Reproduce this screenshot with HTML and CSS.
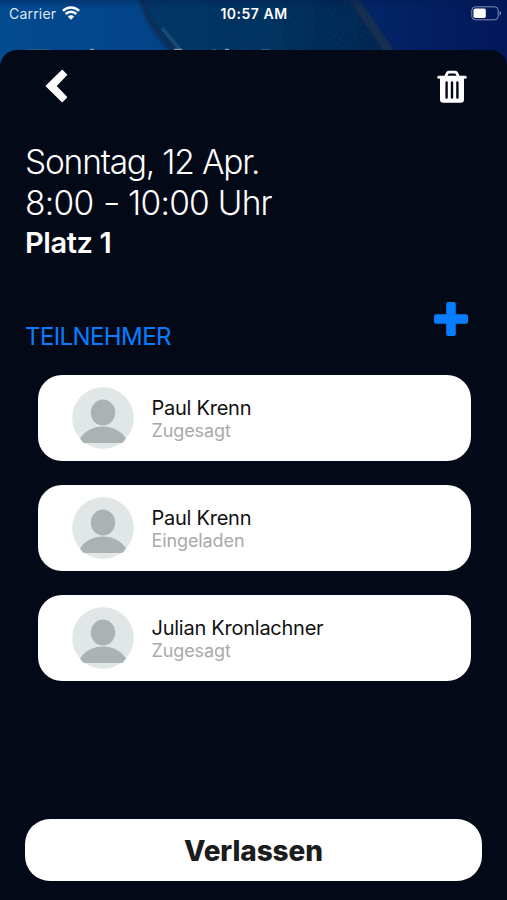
FILE: index.html
```html
<!DOCTYPE html>
<html lang="de">
<head>
<meta charset="utf-8">
<title>Termin</title>
<link rel="stylesheet" href="styles.css">
</head>
<body>
<div class="screen">
  <svg class="backdrop" viewBox="0 0 507 70" aria-hidden="true">
    <defs>
      <linearGradient id="sky" x1="0" x2="1">
        <stop offset="0" stop-color="#034a90"/><stop offset=".28" stop-color="#034488"/>
        <stop offset=".7" stop-color="#032669"/><stop offset="1" stop-color="#021759"/>
      </linearGradient>
      <linearGradient id="racket" x1="0" x2="1">
        <stop offset="0" stop-color="#063766"/><stop offset=".5" stop-color="#05315f"/><stop offset="1" stop-color="#06254e"/>
      </linearGradient>
      <linearGradient id="shade" x2="0" y2="1">
        <stop offset="0" stop-color="#00184a" stop-opacity=".35"/><stop offset=".12" stop-color="#00184a" stop-opacity="0"/>
      </linearGradient>
      <pattern id="strings" width="6" height="6" patternUnits="userSpaceOnUse" patternTransform="rotate(28)">
        <path d="M0 0H6M0 0V6" stroke="#24558a" stroke-width="1" opacity=".16"/>
      </pattern>
      <filter id="soft"><feGaussianBlur stdDeviation="1.3"/></filter>
    </defs>
    <rect width="507" height="70" fill="url(#sky)"/>
    <g filter="url(#soft)">
      <path d="M139-4C144 18 158 38 178 56H397L357-4Z" fill="url(#racket)"/>
      <path d="M141-4C145 17 158 36 176 54" fill="none" stroke="#082f58" stroke-width="5"/>
      <path d="M162 28L182 52" stroke="#32617d" stroke-width="1.6"/>
      <path d="M352-4L391 54" stroke="#122d50" stroke-width="9"/>
    </g>
    <path d="M148 0C154 18 168 36 188 50H382L348 0Z" fill="url(#strings)"/>
    <rect width="507" height="70" fill="url(#shade)"/>
    <path d="M28 49.5H50M212 49.5H216M261 49.5H270" stroke="#2c567a" stroke-width="1"/>
    <path d="M90 49.5H94M174 49.5H182M225 49.5H229" stroke="#8299a8" stroke-width="1.5"/>
  </svg>
  <header class="status">
    <div class="carrier"><span>Carrier</span>
      <svg width="18" height="14" viewBox="0 0 18 14" fill="none" stroke="#fff" stroke-width="2.5">
        <path d="M.9 4.9C5.4.2 12.6.2 17.1 4.9M3.7 8C6.7 5 11.3 5 14.3 8"/>
        <path d="M9 13.7L5.8 10.4C7.6 8.8 10.4 8.8 12.2 10.4Z" fill="#fff" stroke="none"/>
      </svg>
    </div>
    <div class="clock">10:57 AM</div>
    <svg class="battery" width="31" height="15" viewBox="0 0 31 15">
      <rect x=".8" y=".8" width="26.4" height="13" rx="3.6" fill="none" stroke="#7c91b6" stroke-width="1"/>
      <rect x="2.5" y="2.5" width="12.3" height="9.6" rx="1.8" fill="#fff"/>
      <path d="M28.6 5C30.5 5.6 30.5 9 28.6 9.6Z" fill="#7c91b6"/>
    </svg>
  </header>
  <main class="sheet">
    <nav class="toolbar">
      <svg width="23" height="34" viewBox="0 0 23 34" fill="#fff" stroke="#fff" stroke-width="1.4" stroke-linejoin="round">
        <path d="M1.4 17L17.2 1.4L21.5 5.8L10.7 17L21.5 28.2L17.2 32.6Z"/>
      </svg>
      <svg width="30" height="34" viewBox="0 0 30 34">
        <path d="M1.8 7.3H28.2" stroke="#fff" stroke-width="3" stroke-linecap="round"/>
        <path d="M8.7 6.5L10 3.5Q10.5 2.2 12 2.2H18Q19.5 2.2 20 3.5L21.3 6.5" fill="none" stroke="#fff" stroke-width="2.8"/>
        <path d="M3 8H27V29.5Q27 32.7 23.8 32.7H6.2Q3 32.7 3 29.5Z" fill="#fff"/>
        <path d="M9.6 12.5V27.5M15 12.5V27.5M20.4 12.5V27.5" stroke="#040918" stroke-width="2.4" stroke-linecap="round"/>
      </svg>
    </nav>
    <section class="details">
      <div class="date">Sonntag, 12 Apr.</div>
      <div class="time">8:00 <span class="dash">-</span> 10:00 Uhr</div>
      <div class="court">Platz 1</div>
    </section>
    <div class="section-head">
      <h2>TEILNEHMER</h2>
      <svg width="34" height="34" viewBox="0 0 34 34" fill="#087dff"><rect x="12.2" width="9.6" height="34" rx="2"/><rect y="12.2" width="34" height="9.6" rx="2"/></svg>
    </div>
    <svg width="0" height="0" class="symbols"><symbol id="avatar" viewBox="0 0 62 62">
      <circle cx="31" cy="31" r="30.8" fill="#e1e6e6"/><ellipse cx="31" cy="25.6" rx="12.2" ry="13" fill="#aab2b3"/>
      <path d="M8 51.5C18 35.5 44 35.5 54 51.5Q52 54.5 50.2 56H11.8Q10 54.5 8 51.5Z" fill="#aab2b3"/>
    </symbol></svg>
    <ul class="people">
      <li class="card"><svg class="avatar"><use href="#avatar"/></svg><div><div class="name">Paul Krenn</div><div class="state">Zugesagt</div></div></li>
      <li class="card"><svg class="avatar"><use href="#avatar"/></svg><div><div class="name">Paul Krenn</div><div class="state">Eingeladen</div></div></li>
      <li class="card"><svg class="avatar"><use href="#avatar"/></svg><div><div class="name">Julian Kronlachner</div><div class="state">Zugesagt</div></div></li>
    </ul>
    <button class="leave">Verlassen</button>
  </main>
</div>
</body>
</html>
```

FILE: styles.css
```css
* { box-sizing: border-box; }
body { margin: 0; font-family: Inter, "Liberation Sans", sans-serif; color: #fff; background: #032152; }
svg { display: block; flex: none; }
.screen { position: relative; width: 507px; height: 900px; overflow: hidden; display: flex; flex-direction: column; }
.backdrop { position: absolute; top: 0; left: 0; width: 507px; height: 70px; }
.status { position: relative; height: 50px; padding: 4px 5px 0 9px; display: grid; grid-template-columns: 1fr auto 1fr; align-items: start; font-size: 14px; line-height: 20px; }
.carrier { display: flex; gap: 6px; letter-spacing: .2px; color: #dce7f2; }
.carrier svg { margin-top: 2px; }
.clock { font-weight: 600; letter-spacing: .5px; margin-right: 3px; }
.battery { justify-self: end; margin-top: 2px; }
.sheet { position: relative; flex: 1; background: #040918; border-radius: 17px 17px 0 0; padding: 18px 25px 19px; display: flex; flex-direction: column; }
.toolbar { height: 36px; padding: 0 15px 0 20px; display: flex; justify-content: space-between; align-items: center; }
.toolbar svg:last-child { margin-top: 2px; }
.details { margin-top: 38px; }
.date, .time { font-size: 33.5px; line-height: 41px; font-weight: 300; white-space: nowrap; }
.date { letter-spacing: -1.2px; }
.time { letter-spacing: -.75px; }
.dash { display: inline-block; transform: translateY(-1px) scaleX(1.18); margin: 0 1.5px; }
.court { font-size: 29px; line-height: 38px; font-weight: 600; letter-spacing: -.4px; }
.section-head { height: 49px; margin-top: 40px; padding-right: 14px; display: flex; justify-content: space-between; }
.section-head h2 { margin: 20px 0 0; font-size: 24px; line-height: 30px; font-weight: 400; letter-spacing: -.6px; color: #087dff; }
.symbols { position: absolute; }
.people { list-style: none; margin: 24px 11.5px 0 12.5px; padding: 0; display: grid; gap: 24px; }
.card { height: 86px; background: #fff; border-radius: 24px; padding: 0 34px; display: flex; align-items: center; gap: 18px; }
.card > div { padding-top: 2px; }
.avatar { width: 62px; height: 62px; }
.name { color: #111; font-size: 20px; line-height: 24px; letter-spacing: -.25px; }
.state { color: #aaa; font-size: 18px; line-height: 22px; letter-spacing: -.1px; }
.leave { margin-top: auto; height: 62px; border: 0; border-radius: 25px; background: #fff; color: #1b1c1d; font: 800 28px/62px Inter, "Liberation Sans", sans-serif; letter-spacing: -.1px; padding: 1px 0 0; }
```
